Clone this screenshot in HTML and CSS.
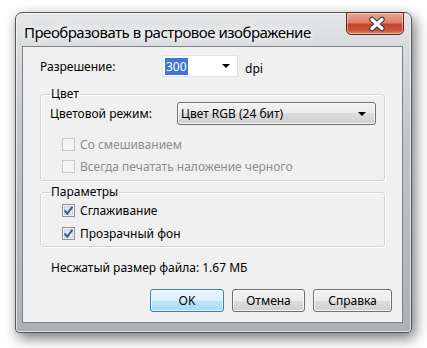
FILE: index.html
```html
<!DOCTYPE html>
<html lang="ru">
<head>
<meta charset="utf-8">
<title>Преобразовать в растровое изображение</title>
<link rel="stylesheet" href="styles.css">
</head>
<body>
<div class="stage">
  <div class="window">
    <div class="titlebar">
      <div class="title">Преобразовать в растровое изображение</div>
      <div class="close" aria-label="Закрыть">
        <svg width="20" height="16" viewBox="0 0 20 16">
          <path d="M5 3.5 L15 12.5 M15 3.5 L5 12.5" stroke="#3b3f45" stroke-width="5.5" stroke-linecap="round"/>
          <path d="M5 3.5 L15 12.5 M15 3.5 L5 12.5" stroke="#ffffff" stroke-width="3.2" stroke-linecap="round"/>
        </svg>
      </div>
    </div>
    <div class="client">
      <div class="res-row">
        <span class="res-label">Разрешение:</span>
        <div class="edit-combo">
          <span class="sel">300</span>
          <span class="arrow"></span>
        </div>
        <span class="unit">dpi</span>
      </div>

      <fieldset class="group group-color">
        <legend>Цвет</legend>
        <div class="mode-row">
          <span class="mode-label">Цветовой режим:</span>
          <div class="drop">
            <span>Цвет RGB (24 бит)</span>
            <span class="arrow"></span>
          </div>
        </div>
        <div class="check-row disabled first">
          <span class="box"></span>
          <span>Со смешиванием</span>
        </div>
        <div class="check-row disabled">
          <span class="box"></span>
          <span>Всегда печатать наложение черного</span>
        </div>
      </fieldset>

      <fieldset class="group group-params">
        <legend>Параметры</legend>
        <div class="check-row first">
          <span class="box checked">
            <svg width="11" height="11" viewBox="0 0 11 11"><path d="M1.5 5.5 L4.3 8.6 L9.5 1.6" fill="none" stroke="#3d57a0" stroke-width="2"/></svg>
          </span>
          <span>Сглаживание</span>
        </div>
        <div class="check-row second">
          <span class="box checked">
            <svg width="11" height="11" viewBox="0 0 11 11"><path d="M1.5 5.5 L4.3 8.6 L9.5 1.6" fill="none" stroke="#3d57a0" stroke-width="2"/></svg>
          </span>
          <span>Прозрачный фон</span>
        </div>
      </fieldset>

      <div class="size-info">Несжатый размер файла: 1.67 МБ</div>

      <div class="buttons">
        <button class="btn btn-default">OK</button>
        <button class="btn btn-cancel">Отмена</button>
        <button class="btn btn-help">Справка</button>
      </div>
    </div>
  </div>
</div>
</body>
</html>
```

FILE: styles.css
```css
* { box-sizing: border-box; }

html, body {
  margin: 0;
  padding: 0;
  background: #ffffff;
}

body {
  font-family: "Noto Sans", "DejaVu Sans", sans-serif;
  font-size: 12px;
  color: #000;
}

.stage {
  padding: 12px 15px;
  width: 427px;
  height: 348px;
}

.window {
  width: 397px;
  height: 321px;
  border: 1px solid #52575e;
  border-radius: 7px 7px 4px 4px;
  background: linear-gradient(to bottom, #e6e7e8 0px, #dadcde 30px, #c3c6c9 120px, #aeb1b4 100%);
  box-shadow: 3px 5px 14px rgba(0, 0, 0, 0.55), inset 0 0 0 1px rgba(255, 255, 255, 0.6);
  padding: 0 7px 0 6px;
  display: flex;
  flex-direction: column;
}

.titlebar {
  height: 33px;
  display: flex;
  justify-content: space-between;
  align-items: flex-start;
}

.title {
  margin: 9px 0 0 2px;
  font-size: 15px;
  letter-spacing: -0.5px;
  line-height: 20px;
  color: #000;
  text-shadow: 0 0 6px #fff, 0 0 10px #fff;
}

.close {
  width: 58px;
  height: 23px;
  margin-top: -1px;
  border: 1px solid #5a2b24;
  border-radius: 0 0 5px 5px;
  background: linear-gradient(to bottom, #eba796 0%, #de7f6c 45%, #c7432b 55%, #cd553d 85%, #e0917a 100%);
  box-shadow: inset 0 0 0 1px rgba(255, 255, 255, 0.4);
  display: flex;
  align-items: center;
  justify-content: center;
}

.close svg {
  display: block;
  margin-left: 4px;
}

.client {
  width: 381px;
  height: 277px;
  border: 1px solid #7a838c;
  background: #f0f0f0;
  padding: 8px 0 0 0;
  display: flex;
  flex-direction: column;
}

.res-row {
  display: flex;
  align-items: center;
  padding-left: 17px;
  height: 22px;
}

.res-label {
  width: 122px;
}

.edit-combo {
  width: 76px;
  height: 22px;
  background: #fff;
  border: 1px solid #e2e3e5;
  display: flex;
  align-items: center;
  justify-content: space-between;
  padding: 0 7px 0 2px;
}

.sel {
  background: #3a78d4;
  color: #fff;
  padding: 0 1px;
  line-height: 17px;
}

.arrow {
  width: 0;
  height: 0;
  border-left: 4px solid transparent;
  border-right: 4px solid transparent;
  border-top: 4px solid #000;
}

.unit {
  margin-left: 7px;
  margin-top: 5px;
}

.group {
  margin: 0 0 0 17px;
  width: 345px;
  border: 1px solid #d3d3d3;
  border-radius: 3px;
  box-shadow: inset 1px 1px 0 #fff, 1px 1px 0 #fff;
  padding: 0 0 0 9px;
  min-width: 0;
}

.group legend {
  padding: 0 1px;
  line-height: 14px;
}

.group-color {
  margin-top: 10px;
  padding-bottom: 4px;
}

.mode-row {
  display: flex;
  align-items: center;
  margin-top: 1px;
  height: 23px;
}

.mode-label {
  width: 127px;
}

.drop {
  width: 199px;
  height: 23px;
  border: 1px solid #707070;
  border-radius: 3px;
  background: linear-gradient(to bottom, #f2f2f2 0%, #ebebeb 50%, #dddddd 50%, #cfcfcf 100%);
  box-shadow: inset 0 0 0 1px rgba(255, 255, 255, 0.7);
  display: flex;
  align-items: center;
  justify-content: space-between;
  padding: 0 9px 0 3px;
}

.check-row {
  display: flex;
  align-items: center;
  height: 20px;
  padding-left: 12px;
  margin-top: 2px;
}

.check-row.first {
  margin-top: 9px;
}

.group-params .check-row.first {
  margin-top: 1px;
}

.group-params .check-row.second {
  margin-top: 3px;
}

.group-params {
  margin-top: 4px;
  padding-bottom: 3px;
}

.box {
  width: 13px;
  height: 13px;
  margin-right: 5px;
  border: 1px solid #8e8f8f;
  background: linear-gradient(135deg, #dcdcdc 0%, #f6f6f6 100%);
  box-shadow: inset 0 0 0 1px #f4f4f4, inset 0 0 0 2px #cfd3d8;
  display: flex;
  align-items: center;
  justify-content: center;
}

.box.checked svg {
  display: block;
}

.check-row.disabled {
  color: #8d8d8d;
}

.check-row.disabled .box {
  border-color: #c9c9c9;
  background: #f4f4f4;
  box-shadow: none;
}

.size-info {
  margin: 13px 0 0 28px;
  line-height: 15px;
}

.buttons {
  display: flex;
  justify-content: flex-end;
  gap: 8px;
  margin-top: 14px;
  padding-right: 10px;
}

.btn {
  font-family: inherit;
  font-size: 12px;
  height: 23px;
  border: 1px solid #707070;
  border-radius: 3px;
  background: linear-gradient(to bottom, #f2f2f2 0%, #ebebeb 50%, #dddddd 50%, #cfcfcf 100%);
  box-shadow: inset 0 0 0 1px rgba(255, 255, 255, 0.75);
  color: #000;
  padding: 0;
}

.btn-default {
  width: 74px;
  border-color: #3c7fb1;
  background: linear-gradient(to bottom, #eaf6fd 0%, #d9f0fc 50%, #bee6fd 50%, #a7d9f5 100%);
  box-shadow: inset 0 0 0 1px rgba(255, 255, 255, 0.6);
}

.btn-cancel {
  width: 73px;
}

.btn-help {
  width: 79px;
}
```
